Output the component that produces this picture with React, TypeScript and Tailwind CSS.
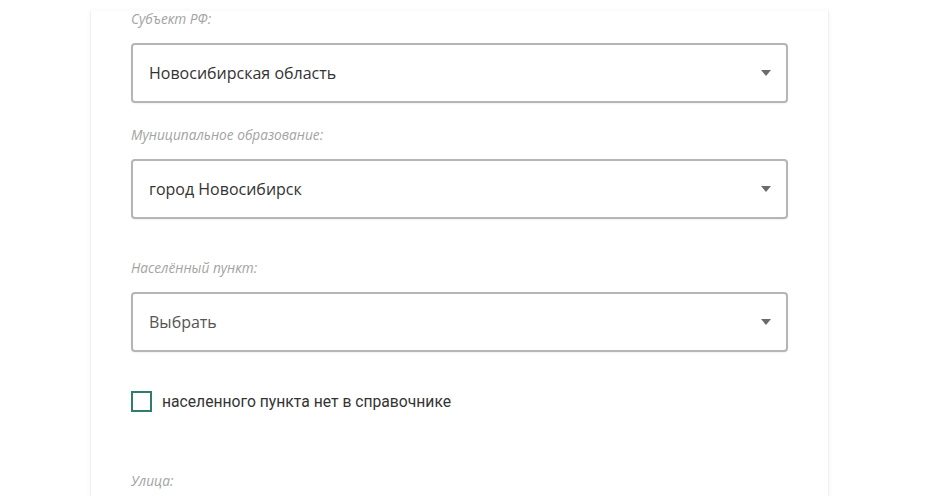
import { useState } from "react";

const fields = [
  { id: "region", label: "Субъект РФ:", value: "Новосибирская область", placeholder: false, gap: "mt-[11px]" },
  { id: "municipality", label: "Муниципальное образование:", value: "город Новосибирск", placeholder: false, gap: "mt-[24px]" },
  { id: "locality", label: "Населённый пункт:", value: "Выбрать", placeholder: true, gap: "mt-[41px]" },
];

function Caret() {
  return (
    <svg width="10" height="6" viewBox="0 0 10 6" className="shrink-0">
      <path d="M0 0h10L5 6z" fill="#6b6b6b" />
    </svg>
  );
}

export default function App() {
  const [missing, setMissing] = useState(false);

  return (
    <div className="min-h-[496px] bg-white overflow-hidden font-['Open_Sans',sans-serif]">
      <div className="ml-[90px] w-[739px] min-h-[496px] bg-white border-x border-[#f0f0f0] shadow-[0_0_6px_rgba(0,0,0,0.04)] px-[40px]">
        {fields.map((f) => (
          <div key={f.id} className={f.gap}>
            <p className="text-[13.7px] leading-[16px] italic text-[#a3a3a3]">{f.label}</p>
            <button className="mt-[16px] w-[657px] h-[60px] rounded-[4px] border-2 border-[#b5b5b5] bg-white flex items-center justify-between pl-[16px] pr-[15px] text-left shadow-[0_1px_2px_rgba(0,0,0,0.06)]">
              <span className={f.placeholder ? "text-[16px] text-[#555]" : "text-[16px] text-[#333]"}>{f.value}</span>
              <Caret />
            </button>
          </div>
        ))}

        <label className="mt-[39px] h-[21px] flex items-center gap-[10px] cursor-pointer">
          <span
            onClick={() => setMissing(!missing)}
            className="w-[21px] h-[21px] border-2 border-[#2f7d6d] bg-white flex items-center justify-center"
          >
            {missing && <span className="w-[11px] h-[11px] bg-[#2f7d6d]" />}
          </span>
          <span className="text-[15.7px] leading-[21px] text-[#333] font-['Roboto',sans-serif]">населенного пункта нет в справочнике</span>
        </label>

        <p className="mt-[61px] text-[13.7px] leading-[16px] italic text-[#a3a3a3]">Улица:</p>
      </div>
    </div>
  );
}
